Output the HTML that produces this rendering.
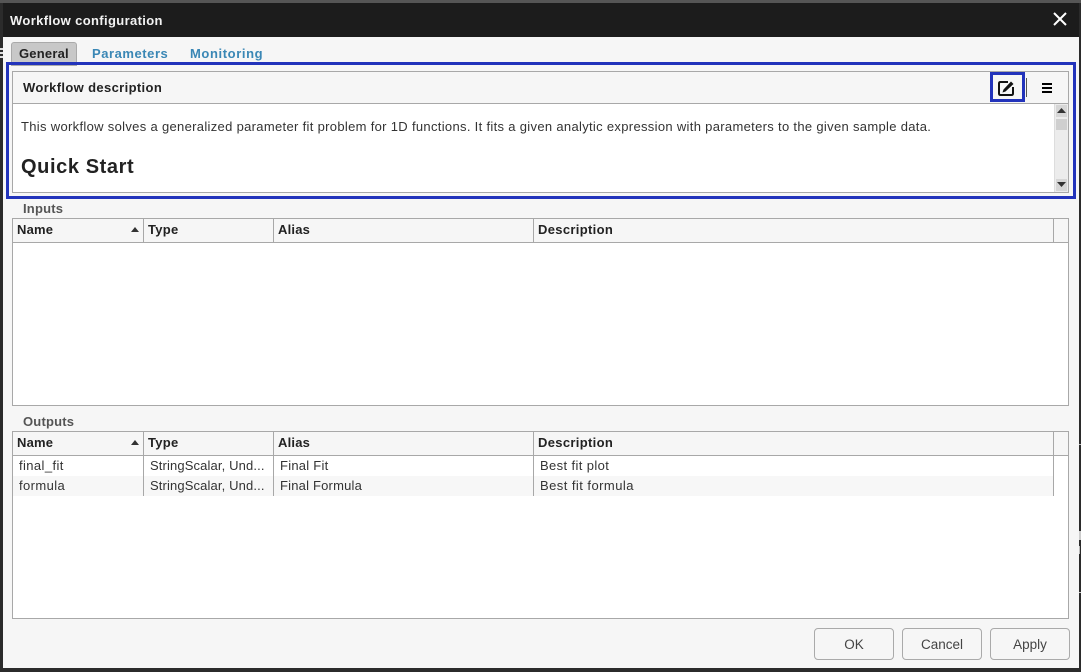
<!DOCTYPE html>
<html><head><meta charset="utf-8"><style>
html,body{margin:0;padding:0}
body{width:1081px;height:672px;background:#2b2b2b;position:relative;overflow:hidden;font-family:"Liberation Sans",sans-serif;font-size:13px;color:#222}
div,span,svg{position:absolute;box-sizing:border-box}
.t{white-space:nowrap;line-height:16px}
.b{font-weight:bold}
.h{height:16px}
.v{background:#a8a8a8;width:1px}
.btn{border:1px solid #aaa;border-radius:4px;background:#f6f6f6;width:80px;height:32px;top:628px;text-align:center;line-height:32px;color:#444;font-size:13.5px}
</style></head><body>
<div style="left:0;top:0;width:1081px;height:3px;background:#555"></div>
<div style="left:3px;top:3px;width:1076px;height:665px;background:#f6f6f6"></div>
<div style="left:3px;top:3px;width:1076px;height:34px;background:#1c1c1c"></div>
<div style="left:0;top:48px;width:3px;height:2px;background:#ddd"></div>
<div style="left:0;top:52px;width:3px;height:2px;background:#ddd"></div>
<div style="left:0;top:56px;width:3px;height:2px;background:#ddd"></div>
<div style="left:1079px;top:444px;width:2px;height:1px;background:#bbb"></div>
<div style="left:1079px;top:531px;width:2px;height:9px;background:#ccc"></div>
<div style="left:1079px;top:546px;width:1px;height:8px;background:#bbb"></div>
<div style="left:1079px;top:592px;width:2px;height:1px;background:#ccc"></div>
<div class="t b" style="left:10px;top:13px;color:#f2f2f2;letter-spacing:.36px">Workflow configuration</div>
<svg style="left:1052px;top:11px" width="16" height="16" viewBox="0 0 16 16"><path d="M2 2L14 14M14 2L2 14" stroke="#fff" stroke-width="2"/></svg>

<div style="left:11px;top:42px;width:66px;height:24px;background:#c8c8c8;border:1px solid #aaa;border-radius:3px 3px 0 0"></div>
<div class="t b" style="left:19px;top:46px;letter-spacing:.2px">General</div>
<div class="t b" style="left:92px;top:46px;color:#3a87b5;letter-spacing:.55px">Parameters</div>
<div class="t b" style="left:190px;top:46px;color:#3a87b5;letter-spacing:.6px">Monitoring</div>

<div style="left:12px;top:71px;width:1057px;height:122px;background:#fff;border:1px solid #a8a8a8"></div>
<div style="left:13px;top:72px;width:1055px;height:32px;background:#f6f6f6;border-bottom:1px solid #a8a8a8"></div>
<div class="t b" style="left:23px;top:80px;letter-spacing:.36px">Workflow description</div>
<div style="left:6px;top:62px;width:1070px;height:137px;border:3px solid #2233bb"></div>
<div style="left:990px;top:72px;width:35px;height:30px;border:3px solid #2233bb"></div>
<svg style="left:998px;top:80px" width="18" height="18" viewBox="0 0 18 18"><path d="M10 2H2.500Q1 2 1 3.500V13.500Q1 15 2.500 15H13.500Q15 15 15 13.500V7" fill="none" stroke="#111" stroke-width="2"/><path d="M13 1.500L15.500 4L7.500 11.500L4.500 12.500L5.500 9.500Z" fill="#111"/></svg>
<div style="left:1026px;top:78px;width:1px;height:19px;background:#555"></div>
<div style="left:1042px;top:83px;width:10px;height:2px;background:#000"></div>
<div style="left:1042px;top:87px;width:10px;height:2px;background:#000"></div>
<div style="left:1042px;top:91px;width:10px;height:2px;background:#000"></div>

<div style="left:1054px;top:104px;width:14px;height:88px;background:#ececec;border-left:1px solid #ddd"></div>
<div style="left:1056px;top:105px;width:11px;height:12px;background:#d6d6d6"></div>
<div style="left:1056px;top:119px;width:11px;height:11px;background:#cfcfcf"></div>
<div style="left:1056px;top:179px;width:11px;height:12px;background:#d6d6d6"></div>
<svg style="left:1057px;top:108px" width="9" height="6"><path d="M0 5H9L4.500 0Z" fill="#333"/></svg>
<svg style="left:1057px;top:182px" width="9" height="6"><path d="M0 0H9L4.500 5Z" fill="#333"/></svg>

<div class="t" style="left:21px;top:119px;letter-spacing:.317px;color:#333">This workflow solves a generalized parameter fit problem for 1D functions. It fits a given analytic expression with parameters to the given sample data.</div>
<div class="t b" style="left:21px;top:155px;font-size:20px;line-height:24px;letter-spacing:.6px">Quick Start</div>

<div class="t b" style="left:23px;top:201px;color:#555;letter-spacing:.2px">Inputs</div>
<div style="left:12px;top:218px;width:1057px;height:188px;background:#fff;border:1px solid #a8a8a8"></div>
<div style="left:13px;top:219px;width:1055px;height:24px;background:#f6f6f6;border-bottom:1px solid #a8a8a8"></div>
<div class="v" style="left:143px;top:219px;height:24px"></div>
<div class="v" style="left:273px;top:219px;height:24px"></div>
<div class="v" style="left:533px;top:219px;height:24px"></div>
<div class="v" style="left:1053px;top:219px;height:24px"></div>
<div class="t b" style="left:17px;top:222px;letter-spacing:.2px">Name</div>
<svg style="left:131px;top:227px" width="8" height="5"><path d="M0 5H8L4 0Z" fill="#333"/></svg>
<div class="t b" style="left:148px;top:222px;letter-spacing:.3px">Type</div>
<div class="t b" style="left:278px;top:222px;letter-spacing:.2px">Alias</div>
<div class="t b" style="left:538px;top:222px;letter-spacing:.33px">Description</div>

<div class="t b" style="left:23px;top:414px;color:#555;letter-spacing:.2px">Outputs</div>
<div style="left:12px;top:431px;width:1057px;height:188px;background:#fff;border:1px solid #a8a8a8"></div>
<div style="left:13px;top:432px;width:1055px;height:24px;background:#f6f6f6;border-bottom:1px solid #a8a8a8"></div>
<div style="left:13px;top:476px;width:1041px;height:20px;background:#f7f7f7"></div>
<div class="v" style="left:143px;top:432px;height:64px"></div>
<div class="v" style="left:273px;top:432px;height:64px"></div>
<div class="v" style="left:533px;top:432px;height:64px"></div>
<div class="v" style="left:1053px;top:432px;height:64px"></div>
<div class="t b" style="left:17px;top:435px;letter-spacing:.2px">Name</div>
<svg style="left:131px;top:440px" width="8" height="5"><path d="M0 5H8L4 0Z" fill="#333"/></svg>
<div class="t b" style="left:148px;top:435px;letter-spacing:.3px">Type</div>
<div class="t b" style="left:278px;top:435px;letter-spacing:.2px">Alias</div>
<div class="t b" style="left:538px;top:435px;letter-spacing:.33px">Description</div>

<div class="t" style="left:19px;top:458px;color:#333;letter-spacing:.4px">final_fit</div>
<div class="t" style="left:150px;top:458px;color:#333;letter-spacing:.13px">StringScalar, Und...</div>
<div class="t" style="left:280px;top:458px;color:#333;letter-spacing:.25px">Final Fit</div>
<div class="t" style="left:540px;top:458px;color:#333;letter-spacing:.38px">Best fit plot</div>
<div class="t" style="left:19px;top:478px;color:#333;letter-spacing:.4px">formula</div>
<div class="t" style="left:150px;top:478px;color:#333;letter-spacing:.13px">StringScalar, Und...</div>
<div class="t" style="left:280px;top:478px;color:#333;letter-spacing:.2px">Final Formula</div>
<div class="t" style="left:540px;top:478px;color:#333;letter-spacing:.45px">Best fit formula</div>

<div class="btn" style="left:814px">OK</div>
<div class="btn" style="left:902px">Cancel</div>
<div class="btn" style="left:990px">Apply</div>
</body></html>
